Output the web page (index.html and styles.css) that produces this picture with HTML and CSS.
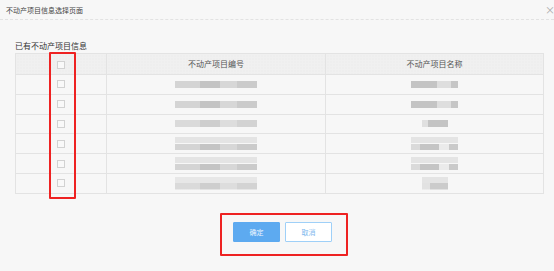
FILE: index.html
```html
<!DOCTYPE html>
<html>
<head>
<meta charset="utf-8">
<link rel="stylesheet" href="styles.css">
</head>
<body>
<div class="dialog">
  <div class="titlebar">
    <span class="title">不动产项目信息选择页面</span>
    <span class="close">×</span>
  </div>
  <div class="content">
    <div class="label">已有不动产项目信息</div>
    <table class="grid">
      <colgroup><col class="c1"><col class="c2"><col class="c3"></colgroup>
      <thead>
        <tr><th><span class="cb"></span></th><th>不动产项目编号</th><th>不动产项目名称</th></tr>
      </thead>
      <tbody>
        <tr><td><span class="cb"></span></td><td><div class="blur b1"></div></td><td><div class="blur b2"></div></td></tr>
        <tr><td><span class="cb"></span></td><td><div class="blur b1"></div></td><td><div class="blur b2"></div></td></tr>
        <tr><td><span class="cb"></span></td><td><div class="blur b1 faint"></div></td><td><div class="blur b3"></div></td></tr>
        <tr><td><span class="cb"></span></td><td><div class="blur b1 two"></div></td><td><div class="blur b4 two"></div></td></tr>
        <tr><td><span class="cb"></span></td><td><div class="blur b1 two"></div></td><td><div class="blur b4 two"></div></td></tr>
        <tr><td><span class="cb"></span></td><td><div class="blur b1 two faint"></div></td><td><div class="blur b5 two"></div></td></tr>
      </tbody>
    </table>
    <div class="actions">
      <button class="btn primary">确定</button>
      <button class="btn ghost">取消</button>
    </div>
  </div>
  <div class="mark mark-col"></div>
  <div class="mark mark-btn"></div>
</div>
</body>
</html>
```
FILE: styles.css
```css
html, body {
  margin: 0;
  padding: 0;
  background: #f7f7f7;
  font-family: "Noto Sans CJK SC", "Noto Sans", sans-serif;
  color: #555;
}
.dialog {
  position: relative;
  width: 554px;
  height: 271px;
  overflow: hidden;
}
.titlebar {
  height: 19px;
  display: flex;
  align-items: center;
  justify-content: space-between;
  padding: 0 0 0 6px;
  border-bottom: 1px dashed #e2e2e2;
}
.title {
  font-size: 7px;
  color: #444;
  line-height: 10px;
}
.close {
  font-size: 10px;
  color: #aaa;
  line-height: 10px;
  margin-right: -1px;
}
.content {
  padding: 20px 10px 0 15px;
}
.label {
  font-size: 8px;
  line-height: 11px;
  color: #333;
  height: 13px;
}
.grid {
  width: 529px;
  border-collapse: collapse;
  table-layout: fixed;
  background: #f7f7f7;
  font-size: 8px;
  line-height: 10px;
}
.c1 { width: 91px; }
.c2 { width: 219px; }
.grid th, .grid td {
  border: 1px solid #e3e3e3;
  padding: 0;
  text-align: center;
  vertical-align: middle;
}
.grid th {
  height: 20px;
  font-weight: normal;
  font-size: 8px;
  color: #555;
  background: #f0f0f0;
  background-image: radial-gradient(#e6e6e6 0.5px, transparent 0.6px);
  background-size: 3px 3px;
}
.grid td {
  height: 18.8px;
  font-size: 0;
  line-height: 0;
}
.cb {
  display: inline-block;
  width: 6px;
  height: 6px;
  border: 1px solid #d2d2d2;
  background: #f9f9f9;
  vertical-align: middle;
}
.blur {
  margin: 0 auto;
  height: 7px;
  filter: blur(0.6px);
}
.b1 {
  width: 82px;
  margin-left: 68px;
  background: linear-gradient(90deg, #d4d4d4 0 30%, #c4c4c4 30% 55%, #d7d7d7 55% 75%, #cbcbcb 75% 100%);
}
.b2 {
  width: 47px;
  background: linear-gradient(90deg, #c4c4c4 0 55%, #dedede 55% 85%, #c6c6c6 85% 100%);
}
.b3 {
  width: 26px;
  background: linear-gradient(90deg, #e0e0e0 0 25%, #c4c4c4 25% 100%);
}
.b4 {
  width: 47px;
  background: linear-gradient(90deg, #dadada 0 20%, #c5c5c5 20% 60%, #ebebeb 60% 80%, #cacaca 80% 100%);
}
.b5 {
  width: 26px;
  background: linear-gradient(90deg, #e2e2e2 0 30%, #cbcbcb 30% 100%);
}
.two {
  height: 13px;
  background-size: 100% 50%;
  background-repeat: no-repeat;
  background-position: 0 100%;
  box-shadow: inset 0 6px 0 #e4e4e4;
}
.faint { opacity: 0.8; }
.actions {
  display: flex;
  justify-content: center;
  gap: 5px;
  padding: 28px 0 0 6px;
}
.btn {
  width: 47px;
  height: 20px;
  font-family: inherit;
  font-size: 7px;
  padding: 0;
  border-radius: 1px;
  cursor: pointer;
}
.primary {
  background: #5daaf0;
  border: 1px solid #5daaf0;
  color: #eef6fe;
}
.ghost {
  background: #fff;
  border: 1px solid #9fd0f8;
  color: #7fb9ee;
}
.mark {
  position: absolute;
  border: 2px solid #ee2222;
  border-radius: 1px;
  box-sizing: border-box;
}
.mark-col {
  left: 49px;
  top: 52px;
  width: 27px;
  height: 147px;
}
.mark-btn {
  left: 220px;
  top: 213px;
  width: 128px;
  height: 43px;
}
```
